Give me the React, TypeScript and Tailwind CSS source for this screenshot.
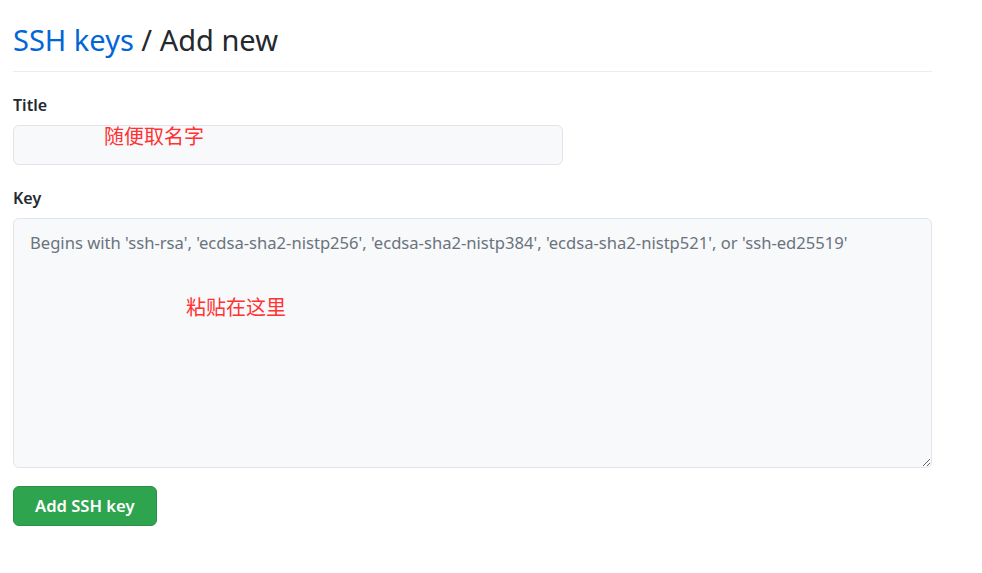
import React from "react";

const App: React.FC = () => {
  return (
    <div
      className="w-[982px] h-[573px] bg-white pl-[13px] pr-[50px] pt-[20px]"
      style={{ fontFamily: '"Noto Sans", "Noto Sans CJK SC", sans-serif' }}
    >
      <div className="w-[919px]">
        <h2 className="text-[29px] leading-[40px] font-normal text-[#24292e] pb-[11px] border-b border-[#eaecef]">
          <a className="text-[#0366d6]">SSH keys</a> / Add new
        </h2>

        <div className="mt-[21px]">
          <label className="block text-[16px] leading-[24px] font-semibold text-[#24292e]">
            Title
          </label>
          <div className="relative mt-[8px] w-[550px]">
            <input
              type="text"
              className="w-full h-[40px] bg-[#f8f9fb] border border-[#e1e4e8] rounded-[6px] px-[12px] outline-none"
            />
            <span className="absolute left-[91px] top-[0px] text-[20px] leading-[24px] text-[#ff3333] pointer-events-none">
              随便取名字
            </span>
          </div>
        </div>

        <div className="mt-[21px]">
          <label className="block text-[16px] leading-[24px] font-semibold text-[#24292e]">
            Key
          </label>
          <div className="relative mt-[8px]">
            <textarea
              className="block w-full h-[250px] bg-[#f8f9fb] border border-[#e1e4e8] rounded-[6px] px-[16px] py-[12px] text-[16.6px] leading-[24px] text-[#24292e] placeholder:text-[#6a737d] outline-none"
              placeholder="Begins with 'ssh-rsa', 'ecdsa-sha2-nistp256', 'ecdsa-sha2-nistp384', 'ecdsa-sha2-nistp521', or 'ssh-ed25519'"
            />
            <span className="absolute left-[173px] top-[78px] text-[20px] leading-[24px] text-[#ff3333] pointer-events-none">
              粘贴在这里
            </span>
          </div>
        </div>

        <button className="mt-[18px] h-[40px] px-[21px] bg-[#2ea44f] border border-[#2a9147] rounded-[6px] text-white text-[16.6px] font-semibold">
          Add SSH key
        </button>
      </div>
    </div>
  );
};

export default App;
